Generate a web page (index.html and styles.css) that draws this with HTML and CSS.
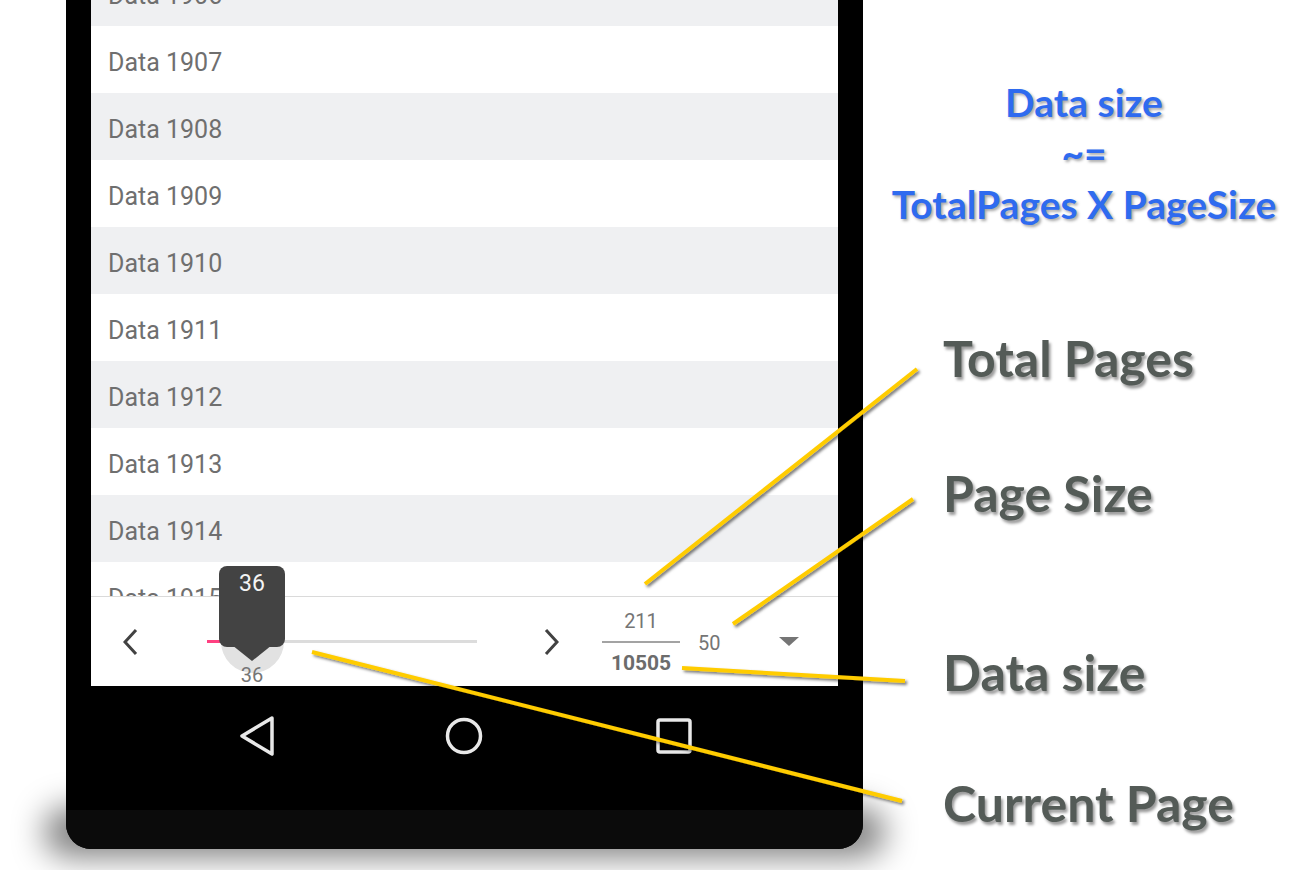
FILE: index.html
```html
<!DOCTYPE html>
<html>
<head>
<meta charset="utf-8">
<link rel="stylesheet" href="styles.css">
</head>
<body>
<div class="stage">
  <div class="phone">
    <div class="screen">
      <div class="list">
        <div class="rows">
          <div class="row alt">Data 1906</div>
          <div class="row">Data 1907</div>
          <div class="row alt">Data 1908</div>
          <div class="row">Data 1909</div>
          <div class="row alt">Data 1910</div>
          <div class="row">Data 1911</div>
          <div class="row alt">Data 1912</div>
          <div class="row">Data 1913</div>
          <div class="row alt">Data 1914</div>
          <div class="row">Data 1915</div>
        </div>
      </div>
      <div class="pager">
        <div class="nav-btn prev">
          <svg width="16" height="28" viewBox="0 0 16 28"><path d="M13 2 L2 14 L13 26" fill="none" stroke="#424242" stroke-width="3"/></svg>
        </div>
        <div class="slider">
          <div class="track"><div class="fill"></div></div>
          <div class="halo"></div>
          <div class="bubble">36</div>
          <div class="thumb-val">36</div>
        </div>
        <div class="nav-btn next">
          <svg width="16" height="28" viewBox="0 0 16 28"><path d="M3 2 L14 14 L3 26" fill="none" stroke="#424242" stroke-width="3"/></svg>
        </div>
        <div class="fraction">
          <span class="total-pages">211</span>
          <span class="data-size">10505</span>
        </div>
        <div class="page-size">50</div>
        <div class="dropdown"></div>
      </div>
    </div>
    <div class="navbar">
      <svg class="nav-icon" width="36" height="40" viewBox="0 0 36 40"><path d="M34 2 L4 20 L34 38 Z" fill="none" stroke="#e8e8e8" stroke-width="3.5" stroke-linejoin="round"/></svg>
      <svg class="nav-icon" width="40" height="40" viewBox="0 0 40 40"><circle cx="20" cy="20" r="16.5" fill="none" stroke="#e8e8e8" stroke-width="3.5"/></svg>
      <svg class="nav-icon" width="40" height="40" viewBox="0 0 40 40"><rect x="4" y="4" width="32" height="32" rx="2" fill="none" stroke="#e8e8e8" stroke-width="3.5"/></svg>
    </div>
    <div class="chin"></div>
  </div>
  <div class="notes">
    <div class="formula">
      <div>Data size</div>
      <div>~=</div>
      <div>TotalPages X PageSize</div>
    </div>
    <div class="label l-total">Total Pages</div>
    <div class="label l-size">Page Size</div>
    <div class="label l-data">Data size</div>
    <div class="label l-current">Current Page</div>
  </div>
  <svg class="leaders" width="1305" height="870" viewBox="0 0 1305 870">
    <defs>
      <filter id="sh" x="-10%" y="-10%" width="120%" height="120%">
        <feDropShadow dx="2" dy="2" stdDeviation="1.5" flood-color="#000" flood-opacity="0.55"/>
      </filter>
    </defs>
    <g stroke="#ffcc00" stroke-width="4" filter="url(#sh)">
      <line x1="645" y1="584" x2="917" y2="369"/>
      <line x1="733" y1="624" x2="913" y2="499"/>
      <line x1="682" y1="668" x2="905" y2="681"/>
      <line x1="312" y1="652" x2="902" y2="801"/>
    </g>
  </svg>
</div>
</body>
</html>
```

FILE: styles.css
```css
* { box-sizing: border-box; }

body {
  margin: 0;
  width: 1305px;
  height: 870px;
  overflow: hidden;
  background: #ffffff;
  font-family: Roboto, "Liberation Sans", sans-serif;
}

.stage {
  position: relative;
  z-index: 0;
  display: flex;
  height: 870px;
}

/* phone body */
.phone {
  position: relative;
  margin-left: 66px;
  width: 797px;
  height: 849px;
  flex: none;
  background: #000;
  border-radius: 0 0 25px 25px;
  display: flex;
  flex-direction: column;
}

.phone::after {
  content: "";
  position: absolute;
  z-index: -1;
  left: -22px;
  right: -22px;
  bottom: -8px;
  height: 50px;
  border-radius: 40px;
  background: rgba(0, 0, 0, 0.5);
  filter: blur(16px);
}

.screen {
  margin: 0 25px;
  background: #fff;
}

.list {
  height: 597px;
  overflow: hidden;
  border-bottom: 1px solid #dadada;
}

.rows {
  margin-top: -41px;
}

.row {
  height: 67px;
  line-height: 73px;
  padding-left: 17px;
  font-size: 25px;
  color: #6f6f6f;
  background: #fff;
}

.row.alt {
  background: #eff0f2;
}

/* pager */
.pager {
  height: 89px;
  display: flex;
  align-items: center;
}

.nav-btn {
  display: flex;
  align-items: center;
  justify-content: center;
  height: 40px;
}

.prev {
  width: 80px;
}

.next {
  width: 40px;
  margin-left: 54px;
}

.slider {
  position: relative;
  margin-left: 36px;
  width: 270px;
  height: 4px;
}

.track {
  height: 3px;
  background: #dcdcdc;
}

.fill {
  width: 14px;
  height: 3px;
  background: #ff4081;
}

.halo {
  position: absolute;
  left: 14px;
  top: -30px;
  width: 63px;
  height: 63px;
  border-radius: 50%;
  background: #e2e2e2;
}

.bubble {
  position: absolute;
  left: 12px;
  top: -74px;
  width: 66px;
  height: 81px;
  border-radius: 8px;
  background: #434343;
  color: #f4f4f4;
  font-size: 23px;
  text-align: center;
  line-height: 36px;
}

.bubble::after {
  content: "";
  position: absolute;
  left: 13px;
  top: 79px;
  border-left: 20px solid transparent;
  border-right: 20px solid transparent;
  border-top: 16px solid #434343;
}

.thumb-val {
  position: absolute;
  left: 15px;
  top: 25px;
  width: 60px;
  text-align: center;
  font-size: 20px;
  line-height: 20px;
  color: #757575;
}

.fraction {
  margin-left: 31px;
  width: 78px;
  display: flex;
  flex-direction: column;
  align-items: center;
  color: #757575;
  font-size: 20px;
}

.total-pages {
  width: 100%;
  text-align: center;
  line-height: 24px;
  padding-bottom: 8px;
  border-bottom: 2px solid #a3a3a3;
}

.data-size {
  font-weight: bold;
  font-size: 21px;
  line-height: 24px;
  padding-top: 8px;
  color: #6c6c6c;
}

.page-size {
  margin-left: 18px;
  margin-top: 3px;
  font-size: 20px;
  color: #757575;
}

.dropdown {
  margin-left: 59px;
  width: 0;
  height: 0;
  border-left: 10px solid transparent;
  border-right: 10px solid transparent;
  border-top: 9px solid #757575;
}

/* android nav */
.navbar {
  height: 124px;
  display: flex;
  align-items: flex-start;
  padding-top: 30px;
  padding-left: 172px;
  gap: 170px;
}

.nav-icon {
  display: block;
}

.chin {
  flex: 1;
  background: #0b0b0b;
  border-radius: 0 0 25px 25px;
}

/* annotations */
.notes {
  flex: 1;
  font-family: Lato, "Open Sans", sans-serif;
  font-weight: bold;
}

.formula {
  padding-top: 77px;
  text-align: center;
  font-size: 39px;
  line-height: 51px;
  color: #2f6bef;
  text-shadow: 2px 2px 3px rgba(0, 0, 0, 0.35);
}

.label {
  padding-left: 80px;
  font-size: 50px;
  line-height: 60px;
  color: #545b57;
  text-shadow: 2px 3px 3px rgba(0, 0, 0, 0.4);
}

.l-total { margin-top: 98px; }
.l-size { margin-top: 75px; }
.l-data { margin-top: 119px; }
.l-current { margin-top: 71px; }

.leaders {
  position: absolute;
  left: 0;
  top: 0;
  pointer-events: none;
}
```
